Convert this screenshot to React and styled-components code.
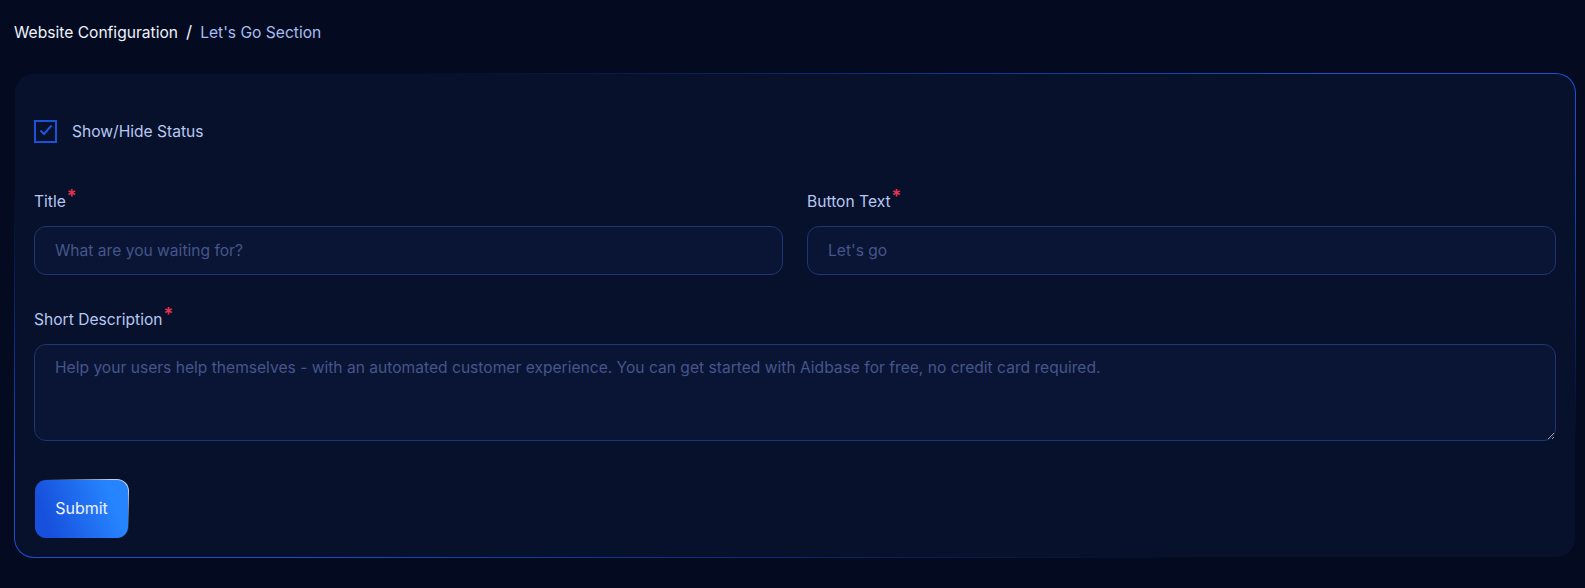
import React from "react";
import styled, { createGlobalStyle } from "styled-components";

const GlobalStyle = createGlobalStyle`
  * { box-sizing: border-box; }
  body {
    margin: 0;
    background: #040b21;
    font-family: Inter, "Noto Sans", "Liberation Sans", sans-serif;
  }
`;

export default function App() {
  return (
    <>
      <GlobalStyle />
      <Page>
        <Breadcrumb>
          <Crumb>Website Configuration</Crumb>
          <Slash>/</Slash>
          <Crumb current>Let's Go Section</Crumb>
        </Breadcrumb>

        <Card>
          <CheckRow>
            <CheckBox>
              <svg width="14" height="12" viewBox="0 0 14 12">
                <path d="M1.5 6.5 L5 10 L12.5 1.5" fill="none" stroke="#1e56d8" strokeWidth="2" />
              </svg>
            </CheckBox>
            <CheckLabel>Show/Hide Status</CheckLabel>
          </CheckRow>

          <TwoCols>
            <Field>
              <Label>
                Title<Req>*</Req>
              </Label>
              <Input placeholder="What are you waiting for?" />
            </Field>
            <Field>
              <Label>
                Button Text<Req>*</Req>
              </Label>
              <Input placeholder="Let's go" />
            </Field>
          </TwoCols>

          <Field>
            <Label>
              Short Description<Req>*</Req>
            </Label>
            <TextArea placeholder="Help your users help themselves - with an automated customer experience. You can get started with Aidbase for free, no credit card required." />
          </Field>

          <SubmitButton>Submit</SubmitButton>
        </Card>
      </Page>
    </>
  );
}

const Page = styled.div`
  padding: 21px 9px 30px 14px;
`;

const Breadcrumb = styled.div`
  display: flex;
  align-items: center;
  gap: 8px;
  height: 22px;
  font-size: 15.6px;
  margin-bottom: 30px;
`;

const Crumb = styled.span`
  color: ${(p) => (p.current ? "#a8bcef" : "#eef2fb")};
`;

const Slash = styled.span`
  color: #eef2fb;
  font-size: 17px;
`;

const Card = styled.div`
  display: flex;
  flex-direction: column;
  border: 1px solid transparent;
  border-radius: 20px;
  background:
    linear-gradient(#07112b, #07112b) padding-box,
    linear-gradient(to bottom right, rgba(30, 80, 210, 0) 12%, #1c4fd0 42%, #1c4fd0 58%, rgba(30, 80, 210, 0) 88%) border-box;
  padding: 45px 19px 18px 19px;
`;

const CheckRow = styled.label`
  display: flex;
  align-items: center;
  gap: 15px;
  height: 24px;
  margin-bottom: 47px;
`;

const CheckBox = styled.span`
  width: 23px;
  height: 23px;
  border: 2px solid #1c52d6;
  display: flex;
  align-items: center;
  justify-content: center;
  padding-bottom: 2px;
`;

const CheckLabel = styled.span`
  color: #b8c7f2;
  font-size: 15.6px;
`;

const TwoCols = styled.div`
  display: grid;
  grid-template-columns: 1fr 1fr;
  gap: 24px;
  margin-bottom: 33px;
`;

const Field = styled.div`
  display: flex;
  flex-direction: column;
  gap: 16px;
`;

const Label = styled.div`
  color: #b8c7f2;
  font-size: 15.6px;
  line-height: 20px;
  height: 20px;
  padding-top: 2px;
`;

const Req = styled.span`
  color: #e8344e;
  font-size: 18px;
  line-height: 0;
  font-weight: 600;
  position: relative;
  top: -4px;
  margin-left: 1px;
`;

const Input = styled.input`
  height: 49px;
  border: 1px solid #1d3676;
  border-radius: 12px;
  background: #0a1434;
  color: #d0dafa;
  font-family: inherit;
  font-size: 15.6px;
  padding: 0 20px;
  outline: none;
  &::placeholder {
    color: #45568a;
  }
`;

const TextArea = styled.textarea`
  height: 97px;
  border: 1px solid #1d3676;
  border-radius: 12px;
  background: #0a1434;
  color: #d0dafa;
  font-family: inherit;
  font-size: 15.6px;
  line-height: 20px;
  padding: 13px 20px;
  outline: none;
  &::placeholder {
    color: #45568a;
  }
`;

const SubmitButton = styled.button`
  align-self: flex-start;
  margin-top: 38px;
  width: 95px;
  height: 60px;
  border: 1px solid transparent;
  border-radius: 12px;
  background:
    linear-gradient(70deg, #1750dc 15%, #2684ff 80%) padding-box,
    linear-gradient(to top right, rgba(200, 220, 255, 0) 55%, rgba(210, 228, 255, 0.9) 90%) border-box;
  color: #eef3ff;
  font-family: inherit;
  font-size: 16px;
  padding-bottom: 4px;
`;
